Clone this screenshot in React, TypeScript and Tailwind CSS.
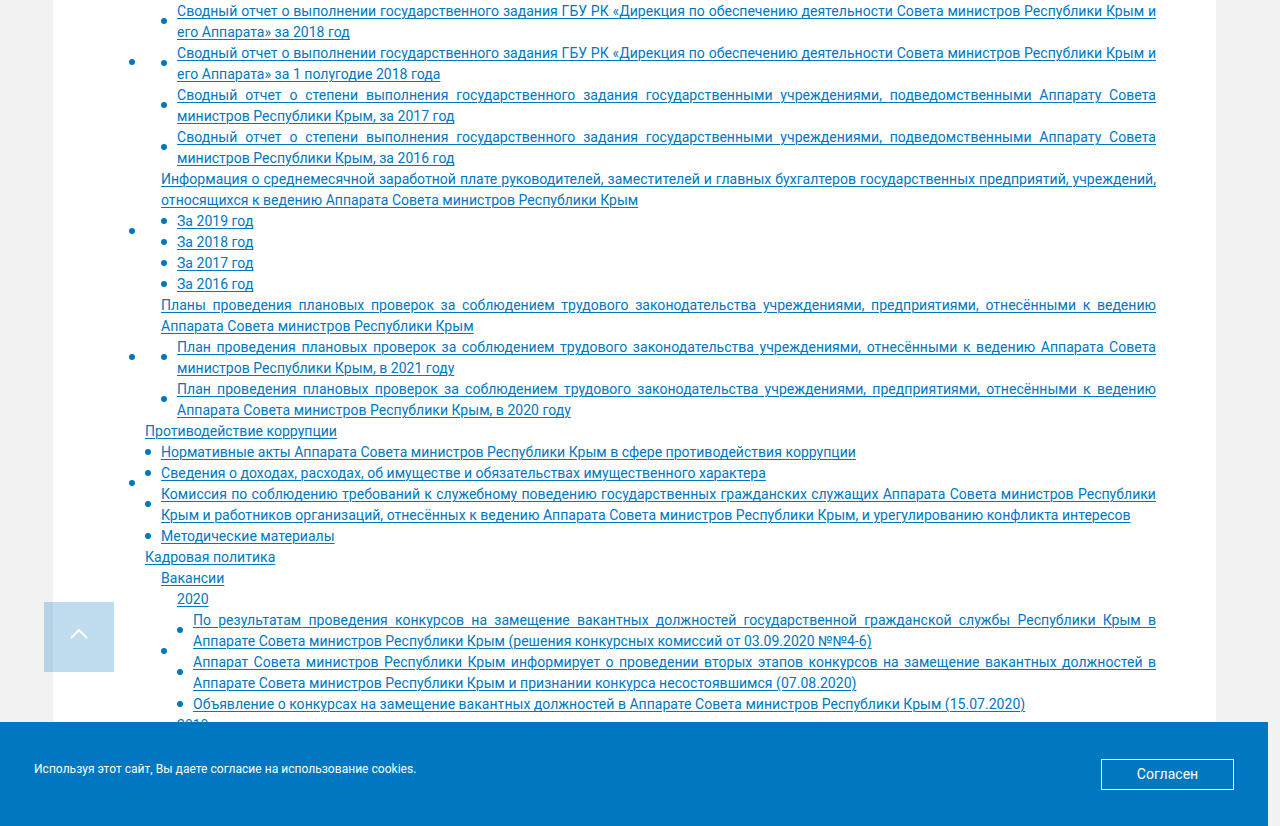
import React from "react";

type Lines = string | string[];

function Txt({ lines }: { lines: Lines }) {
  const arr = Array.isArray(lines) ? lines : [lines];
  return (
    <a href="#" className="block underline decoration-1 underline-offset-[2px] text-[#0077c0]">
      {arr.map((l, i) => (
        <span
          key={i}
          className={
            i < arr.length - 1
              ? "block text-justify [text-align-last:justify]"
              : "block"
          }
        >
          {l}
        </span>
      ))}
    </a>
  );
}

function Dot() {
  return (
    <span className="w-[16px] shrink-0 flex">
      <span className="mb-[2px] w-[6px] h-[6px] rounded-full bg-[#0077c0]" />
    </span>
  );
}

function Li({ dot = true, children }: { dot?: boolean; children: React.ReactNode }) {
  return (
    <li className="flex items-center">
      {dot ? <Dot /> : <span className="w-[16px] shrink-0" />}
      <div className="flex-1 min-w-0">{children}</div>
    </li>
  );
}

function Items({ items }: { items: Lines[] }) {
  return (
    <ul>
      {items.map((t, i) => (
        <Li key={i}>
          <Txt lines={t} />
        </Li>
      ))}
    </ul>
  );
}

export default function App() {
  return (
    <div className="h-[826px] overflow-hidden bg-[#f2f2f2] font-['Roboto','Noto_Sans',sans-serif] text-[14px] leading-[21px] tracking-[0.03px]">
      <div className="ml-[53px] w-[1163px] min-h-full bg-white pl-[76px] pr-[60px]">
        <ul className="-mt-[44px]">
          <Li>
            <div className="pl-[16px]">
              <div className="mb-[3px]">
                <Txt
                  lines={[
                    "Сводные отчеты о выполнении государственных заданий государственными учреждениями, подведомственными Аппарату Совета",
                    "министров Республики Крым",
                  ]}
                />
              </div>
              <Items
                items={[
                  [
                    "Сводный отчет о выполнении государственного задания ГБУ РК «Дирекция по обеспечению деятельности Совета министров Республики Крым и",
                    "его Аппарата» за 2018 год",
                  ],
                  [
                    "Сводный отчет о выполнении государственного задания ГБУ РК «Дирекция по обеспечению деятельности Совета министров Республики Крым и",
                    "его Аппарата» за 1 полугодие 2018 года",
                  ],
                  [
                    "Сводный отчет о степени выполнения государственного задания государственными учреждениями, подведомственными Аппарату Совета",
                    "министров Республики Крым, за 2017 год",
                  ],
                  [
                    "Сводный отчет о степени выполнения государственного задания государственными учреждениями, подведомственными Аппарату Совета",
                    "министров Республики Крым, за 2016 год",
                  ],
                ]}
              />
            </div>
          </Li>
          <Li>
            <div className="pl-[16px]">
              <Txt
                lines={[
                  "Информация о среднемесячной заработной плате руководителей, заместителей и главных бухгалтеров государственных предприятий, учреждений,",
                  "относящихся к ведению Аппарата Совета министров Республики Крым",
                ]}
              />
              <Items items={["За 2019 год", "За 2018 год", "За 2017 год", "За 2016 год"]} />
            </div>
          </Li>
          <Li>
            <div className="pl-[16px]">
              <Txt
                lines={[
                  "Планы проведения плановых проверок за соблюдением трудового законодательства учреждениями, предприятиями, отнесёнными к ведению",
                  "Аппарата Совета министров Республики Крым",
                ]}
              />
              <Items
                items={[
                  [
                    "План проведения плановых проверок за соблюдением трудового законодательства учреждениями, отнесёнными к ведению Аппарата Совета",
                    "министров Республики Крым, в 2021 году",
                  ],
                  [
                    "План проведения плановых проверок за соблюдением трудового законодательства учреждениями, предприятиями, отнесёнными к ведению",
                    "Аппарата Совета министров Республики Крым, в 2020 году",
                  ],
                ]}
              />
            </div>
          </Li>
          <Li>
            <Txt lines="Противодействие коррупции" />
            <Items
              items={[
                "Нормативные акты Аппарата Совета министров Республики Крым в сфере противодействия коррупции",
                "Сведения о доходах, расходах, об имуществе и обязательствах имущественного характера",
                [
                  "Комиссия по соблюдению требований к служебному поведению государственных гражданских служащих Аппарата Совета министров Республики",
                  "Крым и работников организаций, отнесённых к ведению Аппарата Совета министров Республики Крым, и урегулированию конфликта интересов",
                ],
                "Методические материалы",
              ]}
            />
          </Li>
          <Li dot={false}>
            <Txt lines="Кадровая политика" />
            <ul>
              <Li dot={false}>
                <Txt lines="Вакансии" />
                <ul>
                  <Li>
                    <Txt lines="2020" />
                    <Items
                      items={[
                        [
                          "По результатам проведения конкурсов на замещение вакантных должностей государственной гражданской службы Республики Крым в",
                          "Аппарате Совета министров Республики Крым (решения конкурсных комиссий от 03.09.2020 №№4-6)",
                        ],
                        [
                          "Аппарат Совета министров Республики Крым информирует о проведении вторых этапов конкурсов на замещение вакантных должностей в",
                          "Аппарате Совета министров Республики Крым и признании конкурса несостоявшимся (07.08.2020)",
                        ],
                        "Объявление о конкурсах на замещение вакантных должностей в Аппарате Совета министров Республики Крым (15.07.2020)",
                      ]}
                    />
                  </Li>
                  <Li dot={false}>
                    <Txt lines="2019" />
                  </Li>
                </ul>
              </Li>
            </ul>
          </Li>
        </ul>
      </div>

      <a
        href="#"
        aria-label="Наверх"
        className="fixed left-[44px] top-[602px] w-[70px] h-[70px] bg-[#0077c0]/25 flex items-center justify-center"
      >
        <svg width="20" height="12" viewBox="0 0 20 12" className="-mt-[6px]">
          <polyline points="2,10 10,2 18,10" fill="none" stroke="white" strokeWidth="2.2" />
        </svg>
      </a>

      <div className="fixed left-0 bottom-0 w-[1268px] h-[104px] bg-[#0077c0] flex items-center justify-between pl-[34px] pr-[34px]">
        <span className="text-white text-[12px] leading-[16px] pb-[10px] tracking-[0.03px]">
          Используя этот сайт, Вы даете согласие на использование cookies.
        </span>
        <button className="w-[133px] h-[31px] border border-white text-white text-[14px] flex items-center justify-center pt-[1px]">
          Согласен
        </button>
      </div>
    </div>
  );
}
